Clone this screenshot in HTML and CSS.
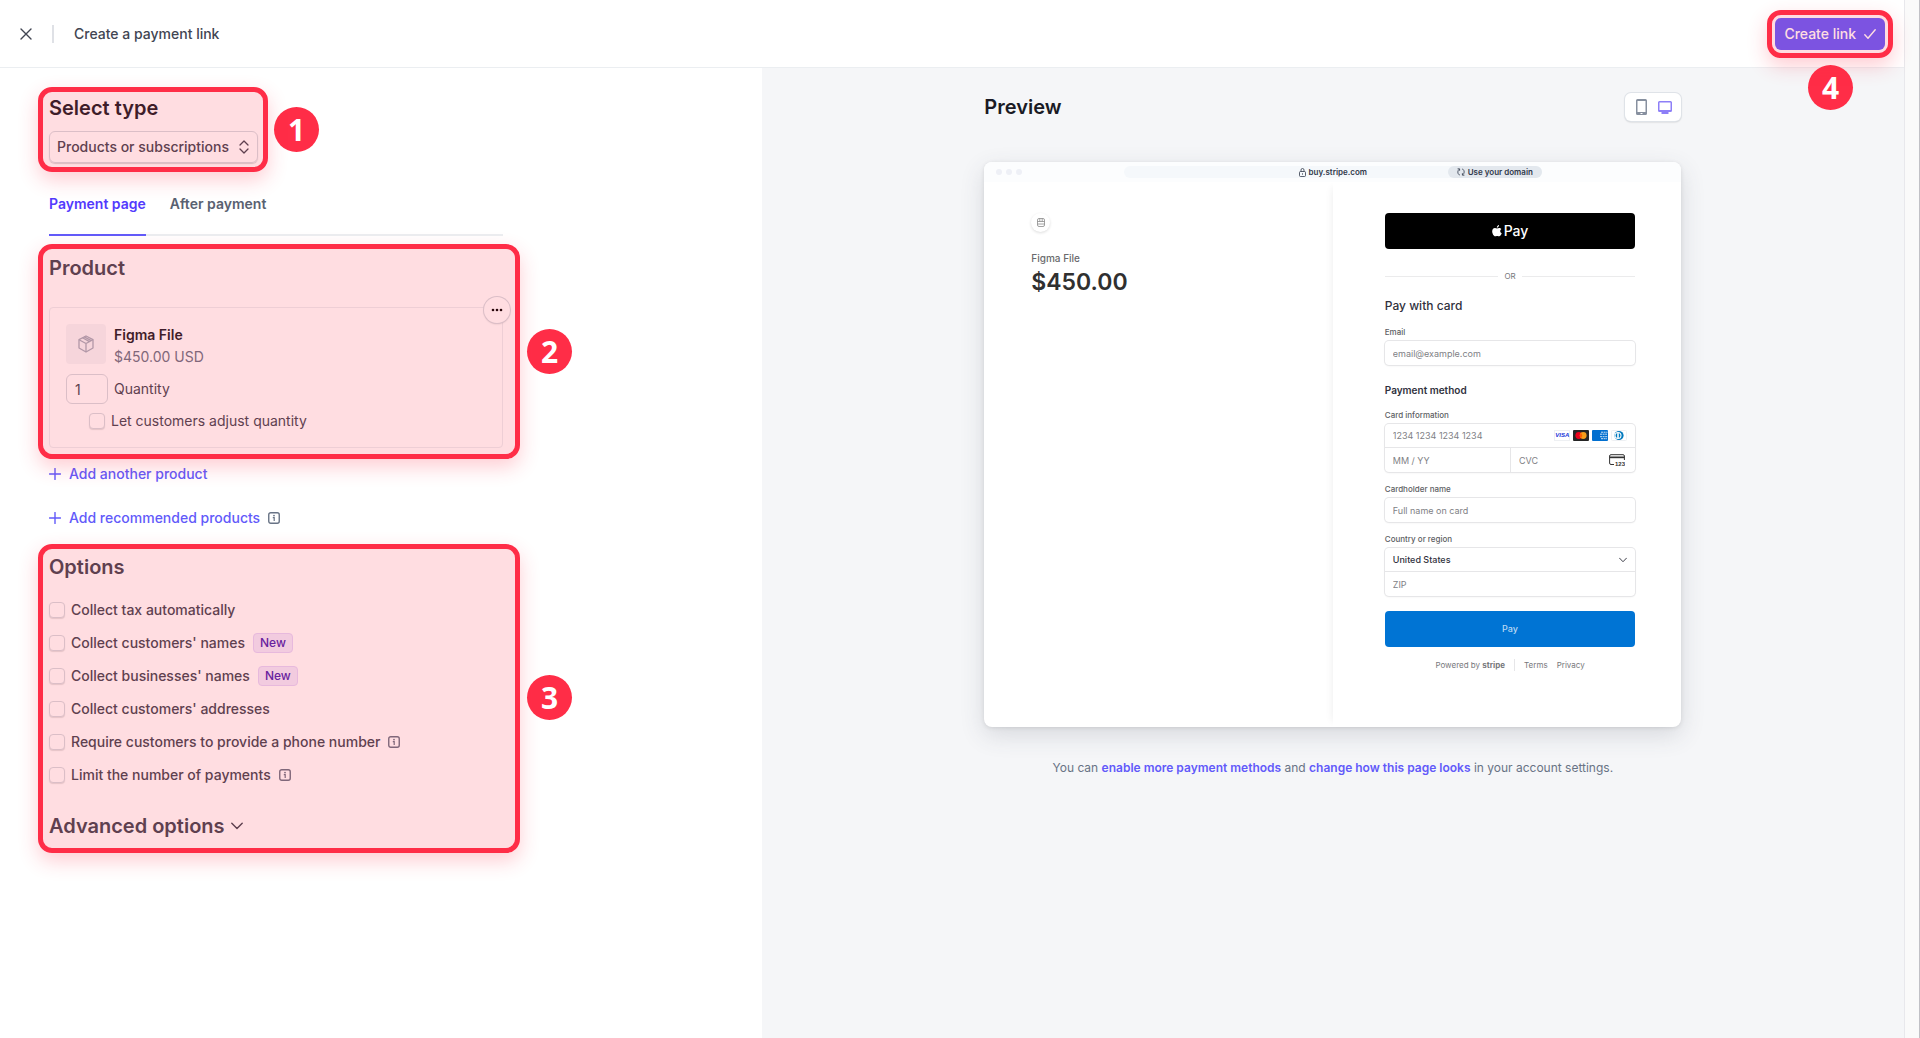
FILE: index.html
```
<!DOCTYPE html>
<html lang="en">
<head>
    <meta charset="UTF-8">
    <meta name="viewport" content="width=device-width, initial-scale=1.0">
    <title>Create a payment link</title>
    <link rel="stylesheet" href="styles.css">
</head>
<body>

<!-- Shared icons -->
<svg class="sprite" aria-hidden="true">
    <symbol id="icon-info" viewBox="0 0 12 12">
        <rect x="0.75" y="0.75" width="10.5" height="10.5" rx="2" fill="none" stroke="currentColor" stroke-width="1.4"/>
        <circle cx="6" cy="3.6" r="0.9" fill="currentColor"/>
        <path d="M4.8 5.7H6.2V8.9" fill="none" stroke="currentColor" stroke-width="1.2"/>
    </symbol>
    <symbol id="icon-plus" viewBox="0 0 12 12">
        <path d="M6 0.5V11.5M0.5 6H11.5" fill="none" stroke="currentColor" stroke-width="1.4" stroke-linecap="round"/>
    </symbol>
    <symbol id="icon-down" viewBox="0 0 12 12">
        <path d="M0.8 3.2L6 8.6L11.2 3.2" fill="none" stroke="currentColor" stroke-width="1.4" stroke-linecap="round" stroke-linejoin="round"/>
    </symbol>
</svg>

<div class="page">
    <div class="app">
        <header class="topbar">
            <button class="close" type="button" aria-label="Close">
                <svg width="12" height="12" viewBox="0 0 12 12"><path d="M1 1L11 11M11 1L1 11" stroke="currentColor" stroke-width="1.4" stroke-linecap="round"/></svg>
            </button>
            <h1>Create a payment link</h1>
            <div class="callout callout-create">
                <button class="create" type="button">
                    Create link
                    <svg width="12" height="12" viewBox="0 0 12 12"><path d="M0.8 6.8L4 10.2L11.2 1.8" fill="none" stroke="currentColor" stroke-width="1.4" stroke-linecap="round" stroke-linejoin="round"/></svg>
                </button>
                <span class="number">4</span>
            </div>
        </header>

        <main class="columns">
            <!-- Form -->
            <div class="editor">
                <section class="callout callout-type">
                    <h2 class="dark"><label for="type">Select type</label></h2>
                    <div class="select-wrap">
                        <select id="type">
                            <option>Products or subscriptions</option>
                        </select>
                        <svg width="10" height="14" viewBox="0 0 10 14"><path d="M1 5L5 1L9 5M1 9L5 13L9 9" fill="none" stroke="currentColor" stroke-width="1.3" stroke-linecap="round" stroke-linejoin="round"/></svg>
                    </div>
                    <span class="number">1</span>
                </section>

                <nav class="tabs">
                    <a class="active" href="#payment-page">Payment page</a>
                    <a href="#after-payment">After payment</a>
                </nav>

                <section class="callout callout-product" id="payment-page">
                    <h2>Product</h2>
                    <div class="product">
                        <button class="more" type="button" aria-label="More">
                            <svg width="12" height="4" viewBox="0 0 12 4"><circle cx="2" cy="2" r="1.3"/><circle cx="6" cy="2" r="1.3"/><circle cx="10" cy="2" r="1.3"/></svg>
                        </button>
                        <div class="thumb">
                            <svg width="16" height="18" viewBox="0 0 16 18" fill="none" stroke="currentColor" stroke-width="1.3" stroke-linejoin="round"><path d="M8 1L15 4.600V13L8 17L1 13V4.600Z"/><path d="M1 4.800L8 8.500L15 4.800M8 8.500V17M4.500 2.800L11.500 6.600M6.300 1.900L13.300 5.600"/></svg>
                        </div>
                        <div class="product-name">
                            <strong>Figma File</strong>
                            <span>$450.00 USD</span>
                        </div>
                        <input class="quantity" id="quantity" type="text" value="1">
                        <label for="quantity">Quantity</label>
                        <div class="adjust">
                            <input type="checkbox" id="adjust">
                            <label for="adjust">Let customers adjust quantity</label>
                        </div>
                    </div>
                    <span class="number">2</span>
                </section>

                <button class="add" type="button"><svg width="12" height="12"><use href="#icon-plus"/></svg>Add another product</button>
                <div class="recommended">
                    <button class="add" type="button"><svg width="12" height="12"><use href="#icon-plus"/></svg>Add recommended products</button>
                    <svg class="info" width="12" height="12"><use href="#icon-info"/></svg>
                </div>

                <section class="callout callout-options">
                    <h2>Options</h2>
                    <ul class="options">
                        <li><input type="checkbox" id="tax"><label for="tax">Collect tax automatically</label></li>
                        <li><input type="checkbox" id="names"><label for="names">Collect customers' names</label><span class="new">New</span></li>
                        <li><input type="checkbox" id="businesses"><label for="businesses">Collect businesses' names</label><span class="new">New</span></li>
                        <li><input type="checkbox" id="addresses"><label for="addresses">Collect customers' addresses</label></li>
                        <li><input type="checkbox" id="phone"><label for="phone">Require customers to provide a phone number</label><svg class="info" width="12" height="12"><use href="#icon-info"/></svg></li>
                        <li><input type="checkbox" id="limit"><label for="limit">Limit the number of payments</label><svg class="info" width="12" height="12"><use href="#icon-info"/></svg></li>
                    </ul>
                    <h2><button class="advanced" type="button">Advanced options <svg width="12" height="12"><use href="#icon-down"/></svg></button></h2>
                    <span class="number">3</span>
                </section>
            </div>

            <!-- Preview -->
            <div class="preview">
                <div class="preview-inner">
                    <div class="preview-head">
                        <h2>Preview</h2>
                        <div class="devices">
                            <button type="button" aria-label="Mobile">
                                <svg width="11" height="16" viewBox="0 0 11 16"><path fill="#87909f" fill-rule="evenodd" d="M1.500 0H9.500Q11 0 11 1.500V14.500Q11 16 9.500 16H1.500Q0 16 0 14.500V1.500Q0 0 1.500 0ZM1.500 2V13H9.500V2ZM4.500 14V15H6.500V14Z"/></svg>
                            </button>
                            <button type="button" aria-label="Desktop">
                                <svg width="14" height="13" viewBox="0 0 14 13"><path fill="#8d7ff7" fill-rule="evenodd" d="M1.500 0H12.500Q14 0 14 1.500V9.500Q14 11 12.500 11H10.500V13H3.500V11H1.500Q0 11 0 9.500V1.500Q0 0 1.500 0ZM1.500 1.500V9H12.500V1.500Z"/></svg>
                            </button>
                        </div>
                    </div>

                    <div class="browser">
                        <div class="browser-bar">
                            <div class="dots"><i></i><i></i><i></i></div>
                            <div class="address">
                                <span class="url">
                                    <svg width="7" height="9" viewBox="0 0 7 9" fill="none" stroke="currentColor" stroke-width="0.8"><rect x="0.500" y="3.500" width="6" height="5" rx="1"/><path d="M2 3.500V2Q2 0.500 3.500 0.500T5 2V3.500M3.500 5.300V6.700"/></svg>
                                    buy.stripe.com
                                </span>
                                <span class="domain">
                                    <svg width="8" height="8" viewBox="0 0 8 8" fill="none" stroke="currentColor" stroke-width="0.8"><path d="M2.800 7L1.800 6.500Q0.800 5.500 0.800 4T2.300 1.200M0.600 0.800H2.600V2.800M5.200 1L6.200 1.500Q7.200 2.500 7.200 4T5.700 6.800M7.400 7.200H5.400V5.200"/></svg>
                                    Use your domain
                                </span>
                            </div>
                        </div>

                        <div class="checkout">
                            <div class="summary">
                                <div class="store">
                                    <svg width="8" height="9" viewBox="0 0 8 9" fill="none" stroke="#8a8a8a" stroke-width="0.8"><rect x="0.500" y="0.500" width="7" height="8" rx="1.500"/><path d="M0.500 3.500H7.500M2.800 0.500V3.500M5.200 0.500V3.500M0.500 6H7.500"/></svg>
                                </div>
                                <p>Figma File</p>
                                <strong>$450.00</strong>
                            </div>

                            <form class="pay-form">
                                <button class="apple-pay" type="button">
                                    <svg width="10" height="12" viewBox="0 0 11 13" fill="#fff"><path d="M7.700 0C7.800 1.500 6.700 2.900 5.300 2.900C5.200 1.500 6.400 0.200 7.700 0Z"/><path d="M5.500 3.700C6.200 3.700 6.900 3.100 7.900 3.100C8.900 3.100 9.800 3.600 10.300 4.400C8.400 5.500 8.700 8.300 10.700 9.100C10.200 10.500 9.100 12.400 7.900 12.400C7 12.400 6.700 11.900 5.700 11.900C4.700 11.900 4.300 12.400 3.500 12.400C1.900 12.400 0.200 9.500 0.200 6.900C0.200 4.500 1.700 3.200 3.200 3.200C4.200 3.200 5 3.700 5.500 3.700Z"/></svg>Pay
                                </button>
                                <div class="or">OR</div>
                                <h3>Pay with card</h3>
                                <label for="email">Email</label>
                                <input class="field" id="email" type="email" placeholder="email@example.com">
                                <h4>Payment method</h4>
                                <label for="card">Card information</label>
                                <div class="group">
                                    <div class="card-number">
                                        <input id="card" type="text" placeholder="1234 1234 1234 1234">
                                        <span class="visa">VISA</span>
                                        <svg width="16" height="11" viewBox="0 0 16 11"><rect width="16" height="11" rx="1" fill="#252525"/><circle cx="5.800" cy="5.500" r="3.400" fill="#eb001b"/><circle cx="10.200" cy="5.500" r="3.400" fill="#f79e1b"/><path d="M8 2.900A3.400 3.400 0 0 1 8 8.100A3.400 3.400 0 0 1 8 2.900Z" fill="#ff5f00"/></svg>
                                        <svg width="16" height="11" viewBox="0 0 16 11"><rect width="16" height="11" rx="1" fill="#016fd0"/><path d="M9 2.200H15.500M8 4.200H15M8 6.700H15.500M9 8.700H15" stroke="#fff" stroke-opacity="0.8" stroke-dasharray="2 0.600"/></svg>
                                        <svg width="16" height="11" viewBox="0 0 16 11"><rect x="0.500" y="0.500" width="15" height="10" rx="1" fill="#fff" stroke="#eef0f3"/><circle cx="8" cy="5.500" r="4.600" fill="#0079be"/><circle cx="7" cy="5.500" r="3.500" fill="#fff"/><path d="M6.200 3A2.700 2.700 0 0 0 6.200 8ZM7.800 3A2.700 2.700 0 0 1 7.800 8Z" fill="#0079be"/></svg>
                                    </div>
                                    <div class="card-extra">
                                        <input type="text" placeholder="MM / YY" aria-label="Expiry">
                                        <div class="cvc">
                                            <input type="text" placeholder="CVC" aria-label="CVC">
                                            <svg width="16" height="12" viewBox="0 0 16 12"><path d="M5 10.500H2Q0.600 10.500 0.600 9V2Q0.600 0.700 2 0.700H14Q15.400 0.700 15.400 2V6" fill="none" stroke="#333"/><path d="M0.600 2.500H15.400V4.200H0.600Z" fill="#333"/><text x="6" y="11.500" class="digits">123</text></svg>
                                        </div>
                                    </div>
                                </div>
                                <label for="holder">Cardholder name</label>
                                <input class="field" id="holder" type="text" placeholder="Full name on card">
                                <label for="country">Country or region</label>
                                <div class="group">
                                    <div class="country">
                                        <select id="country"><option>United States</option></select>
                                        <svg width="8" height="8"><use href="#icon-down"/></svg>
                                    </div>
                                    <input type="text" placeholder="ZIP" aria-label="ZIP">
                                </div>
                                <button class="pay" type="button">Pay</button>
                                <div class="legal">
                                    <span>Powered by <b>stripe</b></span>
                                    <a href="#terms">Terms</a>
                                    <a href="#privacy">Privacy</a>
                                </div>
                            </form>
                        </div>
                    </div>

                    <p class="hint">You can <a href="#methods">enable more payment methods</a> and <a href="#branding">change how this page looks</a> in your account settings.</p>
                </div>
            </div>
        </main>
    </div>
    <div class="gutter"></div>
</div>

</body>
</html>
```
FILE: styles.css
```
/* General styles */
* {
    box-sizing: border-box;
}

body {
    margin: 0;
    background-color: #fff;
    color: #414552;
    font-family: Inter, "Liberation Sans", sans-serif;
    font-size: 14px;
    line-height: 20px;
}

h1, h2, h3, h4, p, ul {
    margin: 0;
    padding: 0;
}

button, input, select {
    font: inherit;
    color: inherit;
    margin: 0;
    padding: 0;
    border: 0;
    background: none;
}

input, select {
    min-width: 0;
    appearance: none;
}

a {
    text-decoration: none;
}

svg {
    flex: none;
}

.sprite {
    position: absolute;
    width: 0;
    height: 0;
}

.page {
    display: flex;
    min-height: 100vh;
}

.app {
    flex: 1;
    display: flex;
    flex-direction: column;
}

.gutter {
    width: 16px;
    background-color: #fafafa;
    border-left: 1px solid #e8e8ec;
    border-right: 1px solid #c1c1c6;
}

/* Top bar */
.topbar {
    display: flex;
    align-items: center;
    height: 68px;
    padding: 0 19px 0 20px;
    border-bottom: 1px solid #ebeef1;
}

.close {
    display: flex;
    padding-right: 20px;
    margin-right: 20px;
    height: 18px;
    align-items: center;
    border-right: 2px solid #dfe1e6;
}

h1 {
    flex: 1;
    font-size: 14px;
    font-weight: 500;
}

.create {
    display: flex;
    align-items: center;
    gap: 8px;
    height: 32px;
    padding: 0 9px;
    border-radius: 6px;
    background-color: #635bff;
    color: #fff;
    font-weight: 500;
}

h2 {
    font-size: 20px;
    font-weight: 600;
    line-height: 28px;
}

.dark {
    color: #1a1b25;
}

/* Numbered callouts */
.callout {
    position: relative;
}

.callout::after {
    content: "";
    position: absolute;
    inset: -10px -17px -11px -11px;
    border: 5px solid #ff2d47;
    border-radius: 14px;
    background-color: rgba(255, 45, 71, 0.16);
    background-clip: padding-box;
    box-shadow: 0 8px 20px rgba(255, 45, 71, 0.24);
    pointer-events: none;
}

.callout-type::after {
    inset: -7px -10px -9px -11px;
}

.callout-options::after {
    inset: -9px -17px -13px -11px;
}

.callout-create::after {
    inset: -8px;
}

.number {
    position: absolute;
    left: calc(100% + 24px);
    top: 50%;
    width: 45px;
    height: 45px;
    margin-top: -22px;
    border-radius: 50%;
    background-color: #ff2d47;
    color: #fff;
    font: bold 30px/45px "Noto Sans", sans-serif;
    text-align: center;
}

.callout-type .number {
    left: calc(100% + 16px);
}

.callout-create .number {
    left: 50%;
    top: 100%;
    margin: 15px 0 0 -22px;
}

/* Editor */
.columns {
    flex: 1;
    display: flex;
}

.editor {
    width: 40%;
    padding: 26px 49px;
}

.editor > section, .tabs {
    max-width: 454px;
}

.callout-type {
    width: fit-content;
}

.select-wrap {
    position: relative;
    margin-top: 9px;
}

.select-wrap select {
    display: block;
    height: 32px;
    padding: 0 28px 0 7px;
    border: 1px solid #d5dbe1;
    border-radius: 6px;
    box-shadow: 0 1px 1px rgba(0, 0, 0, 0.16);
    font-weight: 500;
}

.select-wrap svg {
    position: absolute;
    right: 9px;
    top: 9px;
    pointer-events: none;
}

.tabs {
    display: flex;
    gap: 24px;
    margin-top: 31px;
    border-bottom: 2px solid #ebeef1;
    font-weight: 600;
}

.tabs a {
    margin-bottom: -2px;
    padding-bottom: 20px;
    border-bottom: 2px solid transparent;
    color: #596171;
}

.tabs a.active {
    color: #533afd;
    border-color: #625afa;
}

.callout-product {
    margin-top: 18px;
}

.product {
    position: relative;
    display: grid;
    grid-template-columns: 42px 1fr;
    align-items: center;
    column-gap: 6px;
    margin-top: 25px;
    padding: 16px;
    border: 1px solid #ebeef1;
    border-radius: 4px;
}

.more {
    position: absolute;
    top: -11px;
    right: -8px;
    display: flex;
    align-items: center;
    justify-content: center;
    width: 26px;
    height: 26px;
    border-radius: 50%;
    background-color: #fff;
    box-shadow: 0 0 0 1px #d5dbe1, 0 1px 2px rgba(0, 0, 0, 0.2);
}

.thumb {
    display: flex;
    align-items: center;
    justify-content: center;
    align-self: start;
    width: 40px;
    height: 40px;
    border-radius: 4px;
    background-color: #f5f6f8;
    color: #a3acba;
}

.product-name {
    display: grid;
    line-height: 22px;
}

.product-name strong {
    color: #1a1b25;
    font-weight: 600;
}

.product-name span {
    color: #687385;
}

.quantity {
    height: 30px;
    margin-top: 6px;
    padding: 0 8px;
    border: 1px solid #d5dbe1;
    border-radius: 6px;
}

.quantity + label {
    margin-top: 6px;
}

.adjust {
    grid-column: 1 / -1;
    display: flex;
    align-items: center;
    gap: 6px;
    margin: 7px 0 0 23px;
}

input[type="checkbox"] {
    width: 16px;
    height: 16px;
    border: 1px solid #d5dbe1;
    border-radius: 4px;
    background-color: #fff;
    box-shadow: 0 1px 1px rgba(0, 0, 0, 0.12);
}

.add {
    display: flex;
    align-items: center;
    gap: 8px;
    color: #625afa;
    font-weight: 500;
}

.callout-product + .add {
    margin-top: 16px;
}

.recommended {
    display: flex;
    align-items: center;
    gap: 8px;
    margin-top: 24px;
    margin-bottom: 25px;
}

.info {
    color: #687385;
}

.options {
    display: grid;
    gap: 13px;
    margin: 19px 0 27px;
    list-style: none;
}

.options li {
    display: flex;
    align-items: center;
    gap: 6px;
    height: 20px;
    font-weight: 500;
}

.options .new, .options .info {
    margin-left: 2px;
}

.new {
    padding: 0 6px;
    border: 1px solid #e3d4fb;
    border-radius: 4px;
    background-color: #f0eafd;
    color: #4b20b0;
    font-size: 12px;
    line-height: 18px;
}

.advanced {
    display: flex;
    align-items: center;
    gap: 6px;
}

/* Preview */
.preview {
    flex: 1;
    padding: 25px 40px;
    background-color: #f5f6f8;
}

.preview-inner {
    max-width: 697px;
    margin: 0 auto;
}

.preview-head {
    display: flex;
    align-items: center;
    justify-content: space-between;
    color: #1a1b25;
}

.devices {
    display: flex;
    padding: 0 4px;
    border-radius: 6px;
    background-color: #fff;
    box-shadow: 0 0 0 1px #dfe3e8, 0 1px 2px rgba(0, 0, 0, 0.24);
}

.devices button {
    display: flex;
    align-items: center;
    justify-content: center;
    width: 24px;
    height: 28px;
}

.browser {
    margin-top: 41px;
    border-radius: 8px;
    background-color: #fff;
    box-shadow: 0 8px 24px rgba(60, 66, 87, 0.16), 0 1px 4px rgba(0, 0, 0, 0.1);
}

.browser-bar {
    position: relative;
    display: flex;
    align-items: center;
    justify-content: center;
    height: 20px;
    border-radius: 8px 8px 0 0;
    background-color: #fcfdfe;
    color: #30384a;
    font-size: 8px;
    font-weight: 600;
    line-height: 12px;
}

.dots {
    position: absolute;
    left: 12px;
    display: flex;
    gap: 4px;
}

.dots i {
    width: 6px;
    height: 6px;
    border-radius: 50%;
    background-color: #eef0f6;
}

.address {
    position: relative;
    display: flex;
    justify-content: center;
    width: 60%;
    border-radius: 6px;
    background-color: #f5f8fb;
}

.url, .domain {
    display: flex;
    align-items: center;
    gap: 3px;
}

.domain {
    position: absolute;
    right: 0;
    padding: 0 9px;
    border-radius: 6px;
    background-color: #e3e8ee;
}

.checkout {
    display: grid;
    grid-template-columns: 1fr 1fr;
    color: #30313d;
}

.summary {
    padding: 31px 47px;
}

.summary p {
    margin-top: 16px;
    color: #6a6a6c;
    font-size: 10px;
    font-weight: 500;
}

.summary strong {
    display: block;
    color: #303030;
    font-size: 23px;
    font-weight: 600;
    line-height: 28px;
}

.store {
    display: flex;
    align-items: center;
    justify-content: center;
    width: 19px;
    height: 19px;
    border-radius: 50%;
    box-shadow: 0 1px 3px rgba(0, 0, 0, 0.14);
}

.pay-form {
    padding: 31px 46px 56px 52px;
    border-radius: 0 0 8px 0;
    box-shadow: -6px 0 8px -6px rgba(0, 0, 0, 0.08);
    font-size: 9px;
    line-height: 12px;
}

.apple-pay {
    display: flex;
    align-items: center;
    justify-content: center;
    gap: 2px;
    width: 100%;
    height: 36px;
    border-radius: 4px;
    background-color: #000;
    color: #fff;
    font-size: 14px;
    font-weight: 500;
}

.or {
    display: flex;
    align-items: center;
    gap: 6px;
    margin-top: 21px;
    color: #77787c;
    font-size: 8px;
}

.or::before, .or::after {
    content: "";
    flex: 1;
    height: 1px;
    background-color: #ebebec;
}

h3 {
    margin: 16px 0 12px;
    font-size: 12px;
    font-weight: 500;
    line-height: 16px;
}

h4 {
    margin: 18px 0 12px;
    font-size: 10px;
    font-weight: 600;
    line-height: 14px;
}

.pay-form label {
    display: block;
    margin: 11px 0 3px;
    color: #5d5e63;
    font-size: 8px;
    font-weight: 500;
}

.pay-form ::placeholder {
    color: #808185;
    opacity: 1;
}

.pay-form input, .pay-form select {
    display: block;
    width: 100%;
    height: 24px;
    padding: 0 8px;
}

.pay-form .field, .group {
    border-radius: 4px;
    box-shadow: 0 0 0 1px #e6e6e8, 0 1px 2px rgba(0, 0, 0, 0.08);
}

.card-number, .cvc, .country {
    display: flex;
    align-items: center;
}

.card-number, .country {
    height: 24px;
    border-bottom: 1px solid #e6e6e8;
}

.card-number {
    gap: 3px;
    padding-right: 8px;
}

.card-number input {
    flex: 1;
}

.visa {
    width: 16px;
    border: 1px solid #eef0f3;
    color: #1a36d8;
    font: italic bold 6px/9px "Liberation Sans", sans-serif;
    text-align: center;
}

.card-extra {
    display: grid;
    grid-template-columns: 1fr 1fr;
}

.cvc {
    padding-right: 10px;
    border-left: 1px solid #e6e6e8;
}

.digits {
    fill: #333;
    font: bold 6px "Liberation Sans", sans-serif;
}

.country {
    padding-right: 8px;
    font-weight: 500;
}

.pay {
    width: 100%;
    height: 36px;
    margin-top: 15px;
    border-radius: 4px;
    background-color: #0074d4;
    color: #b9d8f3;
    font-weight: 500;
}

.legal {
    display: flex;
    justify-content: center;
    gap: 9px;
    margin-top: 12px;
    color: #77787c;
    font-size: 8px;
}

.legal span {
    padding-right: 9px;
    border-right: 1px solid #e6e6e8;
}

.legal a {
    color: inherit;
}

.hint {
    margin-top: 31px;
    color: #687385;
    font-size: 12px;
    text-align: center;
}

.hint a {
    color: #625afa;
    font-weight: 600;
}
```
